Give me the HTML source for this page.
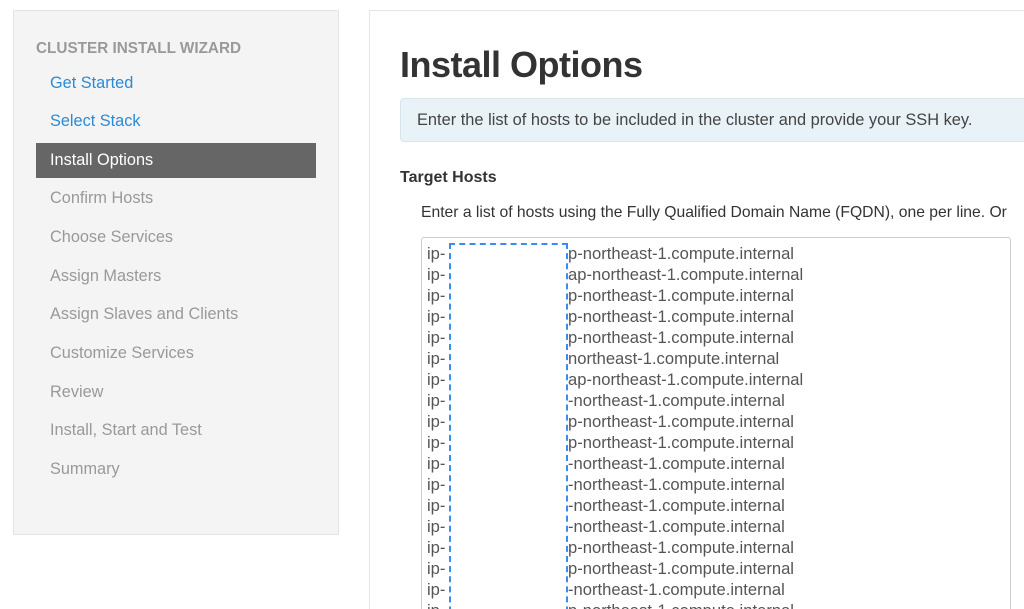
<!DOCTYPE html>
<html style="overflow:hidden;width:1024px;height:609px"><head><meta charset="utf-8"><style>
html,body{margin:0;width:1024px;height:609px;overflow:hidden}
body{background:#fff;font-family:"Liberation Sans",Arial,sans-serif;position:relative}
.side{position:absolute;left:13px;top:10px;width:326px;height:525px;background:#f4f4f4;border:1px solid #e3e3e3;box-sizing:border-box}
.h5{position:absolute;left:36px;top:40px;margin:0;font-size:15.3px;font-weight:bold;color:#999}
.it{position:absolute;left:36px;width:280px;height:35px;line-height:35px;font-size:16.3px;color:#999;padding-left:14px;box-sizing:border-box;white-space:nowrap}
.it.l{color:#2a8ad6}
.it.a{background:#666;color:#fff}
.main{position:absolute;left:369px;top:10px;width:700px;height:640px;border:1px solid #e5e5e5;border-right:none;box-sizing:border-box}
h1{position:absolute;left:400px;top:44px;margin:0;font-size:36px;font-weight:bold;color:#333;letter-spacing:-0.5px;white-space:nowrap}
.alert{position:absolute;left:400px;top:98px;width:680px;height:44px;background:#e8f2f7;border:1px solid #d6e6ee;border-radius:4px;box-sizing:border-box;font-size:16.4px;color:#444;line-height:42px;padding-left:16px;white-space:nowrap;overflow:hidden}
.th{position:absolute;left:400px;top:169px;font-size:16px;font-weight:bold;color:#333}
.desc{position:absolute;left:421px;top:204px;font-size:15.7px;color:#333;white-space:nowrap}
.ta{position:absolute;left:421px;top:237px;width:590px;height:420px;border:1px solid #ccc;border-radius:3px;box-sizing:border-box}
.ln{position:absolute;font-size:16.6px;color:#555;line-height:21px;white-space:nowrap}
.dash{position:absolute;left:449px;top:243px;width:119px;height:420px;border:2px dashed #3b8cf0;border-bottom:none;box-sizing:border-box}
</style></head><body>
<div class="side"></div>
<div class="h5">CLUSTER INSTALL WIZARD</div>
<div class="it l" style="top:66px">Get Started</div>
<div class="it l" style="top:104px">Select Stack</div>
<div class="it a" style="top:143px">Install Options</div>
<div class="it" style="top:181px">Confirm Hosts</div>
<div class="it" style="top:220px">Choose Services</div>
<div class="it" style="top:259px">Assign Masters</div>
<div class="it" style="top:297px">Assign Slaves and Clients</div>
<div class="it" style="top:336px">Customize Services</div>
<div class="it" style="top:375px">Review</div>
<div class="it" style="top:413px">Install, Start and Test</div>
<div class="it" style="top:452px">Summary</div>
<div class="main"></div>
<h1>Install Options</h1>
<div class="alert">Enter the list of hosts to be included in the cluster and provide your SSH key.</div>
<div class="th">Target Hosts</div>
<div class="desc">Enter a list of hosts using the Fully Qualified Domain Name (FQDN), one per line. Or</div>
<div class="ta"></div>
<div class="ln" style="left:427px;top:243px">ip-<br>ip-<br>ip-<br>ip-<br>ip-<br>ip-<br>ip-<br>ip-<br>ip-<br>ip-<br>ip-<br>ip-<br>ip-<br>ip-<br>ip-<br>ip-<br>ip-<br>ip-</div>
<div class="ln" style="left:568px;top:243px">p-northeast-1.compute.internal<br>ap-northeast-1.compute.internal<br>p-northeast-1.compute.internal<br>p-northeast-1.compute.internal<br>p-northeast-1.compute.internal<br>northeast-1.compute.internal<br>ap-northeast-1.compute.internal<br>-northeast-1.compute.internal<br>p-northeast-1.compute.internal<br>p-northeast-1.compute.internal<br>-northeast-1.compute.internal<br>-northeast-1.compute.internal<br>-northeast-1.compute.internal<br>-northeast-1.compute.internal<br>p-northeast-1.compute.internal<br>p-northeast-1.compute.internal<br>-northeast-1.compute.internal<br>p-northeast-1.compute.internal</div>
<div class="dash"></div>
</body></html>
